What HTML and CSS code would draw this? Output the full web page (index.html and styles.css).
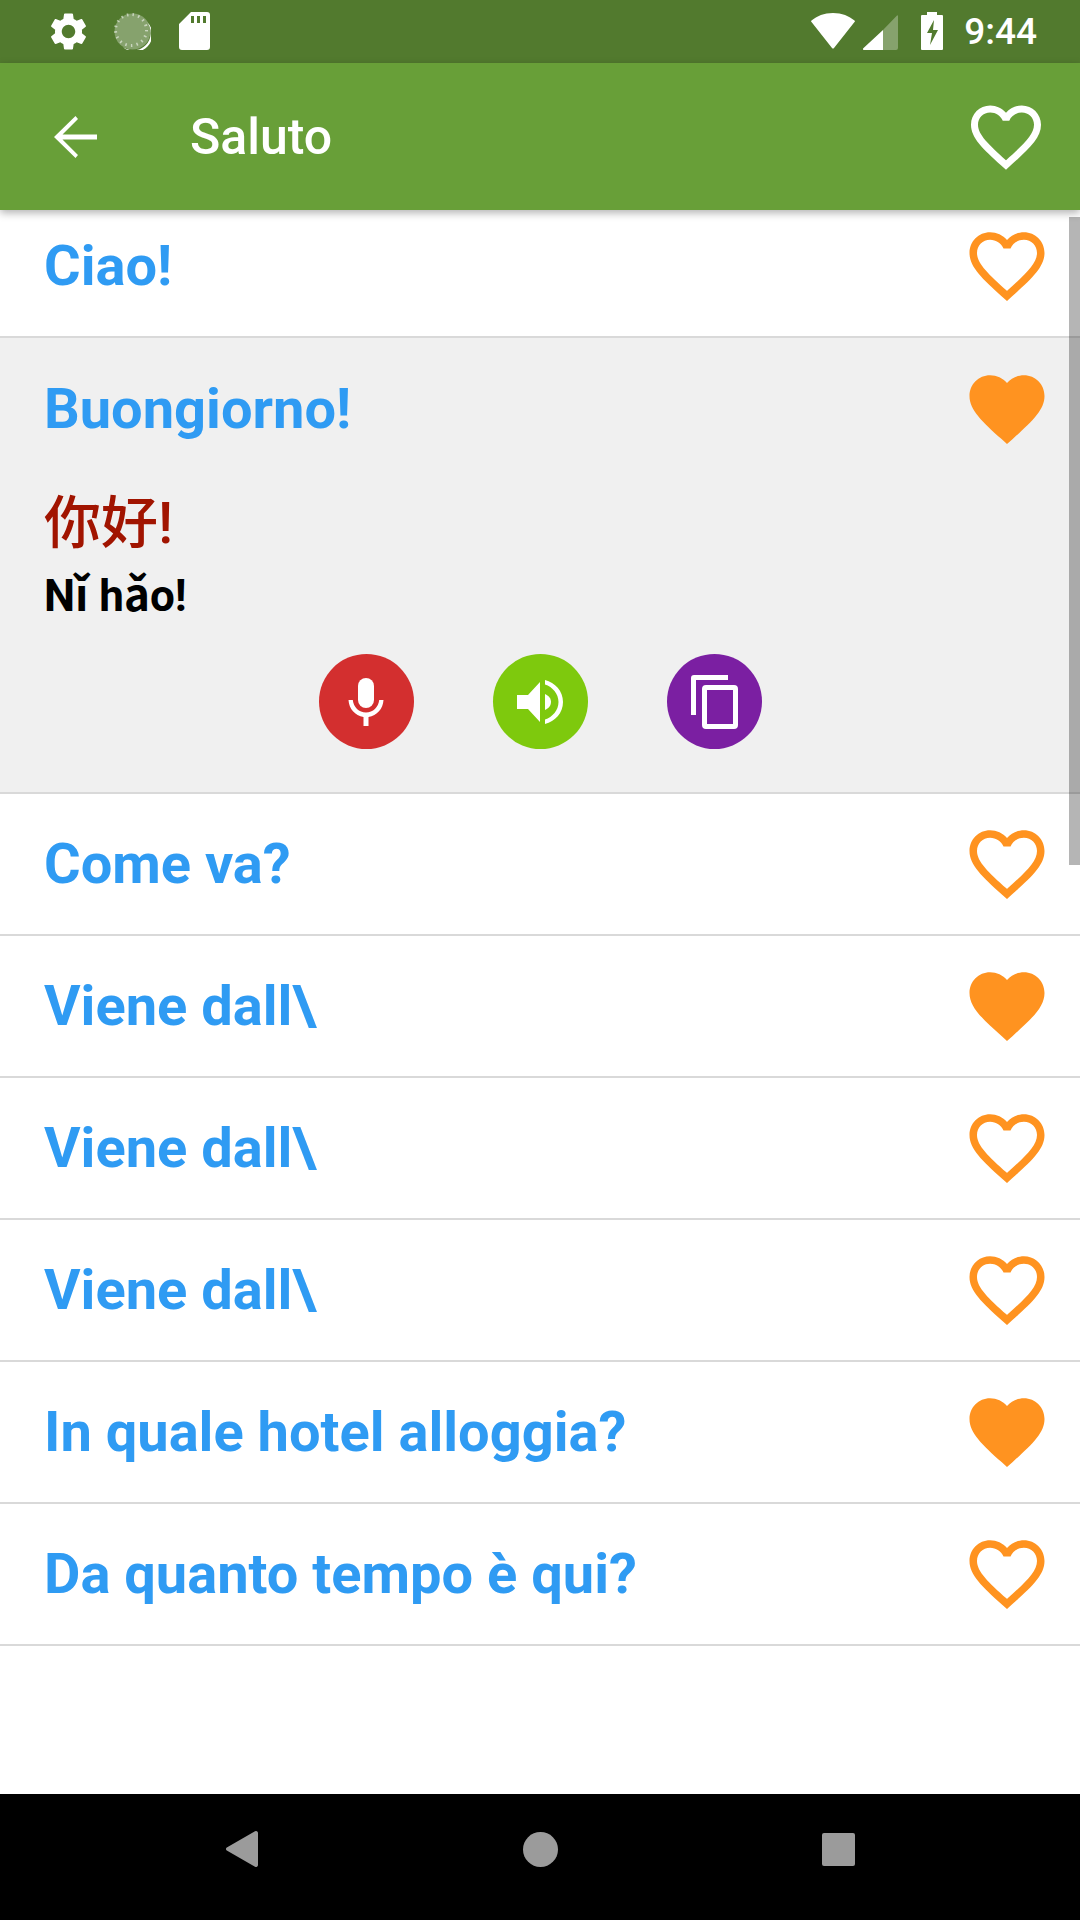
FILE: index.html
```html
<!DOCTYPE html>
<html lang="it">
<head>
    <meta charset="UTF-8">
    <meta name="viewport" content="width=device-width, initial-scale=1.0">
    <title>Saluto</title>
    <link rel="stylesheet" href="styles.css">
</head>
<body>
    <svg class="defs" width="0" height="0">
        <defs>
            <path id="heartOutline" d="M16.5 3c-1.74 0-3.41.81-4.5 2.09C10.91 3.81 9.24 3 7.5 3 4.42 3 2 5.42 2 8.5c0 3.78 3.4 6.86 8.55 11.54L12 21.35l1.45-1.32C18.6 15.36 22 12.28 22 8.5 22 5.42 19.58 3 16.5 3zm-4.4 15.55l-.1.1-.1-.1C7.14 14.24 4 11.39 4 8.5 4 6.5 5.5 5 7.5 5c1.54 0 3.04.99 3.57 2.36h1.87C13.46 5.99 14.96 5 16.5 5c2 0 3.5 1.5 3.5 3.5 0 2.89-3.14 5.74-7.9 10.05z"/>
            <path id="heartFull" d="M12 21.35l-1.45-1.32C5.4 15.36 2 12.28 2 8.5 2 5.42 4.42 3 7.5 3c1.74 0 3.41.81 4.5 2.09C13.09 3.81 14.76 3 16.5 3 19.58 3 22 5.42 22 8.5c0 3.78-3.4 6.86-8.55 11.54L12 21.35z"/>
        </defs>
    </svg>

    <div class="phone">
        <!--status bar-->
        <header class="statusBar">
            <div class="statusLeft">
                <svg class="gear" viewBox="2.4 1.6 19.2 20.8"><path d="M19.14 12.94c.04-.3.06-.61.06-.94 0-.32-.02-.64-.07-.94l2.03-1.58c.18-.14.23-.41.12-.61l-1.92-3.32c-.12-.22-.37-.29-.59-.22l-2.39.96c-.5-.38-1.03-.7-1.62-.94l-.36-2.54c-.04-.24-.24-.41-.48-.41h-3.84c-.24 0-.43.17-.47.41l-.36 2.54c-.59.24-1.13.57-1.62.94l-2.39-.96c-.22-.08-.47 0-.59.22L2.74 8.87c-.12.21-.08.47.12.61l2.03 1.58c-.05.3-.09.63-.09.94s.02.64.07.94l-2.03 1.58c-.18.14-.23.41-.12.61l1.92 3.32c.12.22.37.29.59.22l2.39-.96c.5.38 1.03.7 1.62.94l.36 2.54c.05.24.24.41.48.41h3.84c.24 0 .44-.17.47-.41l.36-2.54c.59-.24 1.13-.56 1.62-.94l2.39.96c.22.08.47 0 .59-.22l1.92-3.32c.12-.22.07-.47-.12-.61l-2.01-1.58zM12 15.6c-1.98 0-3.6-1.62-3.6-3.6s1.62-3.6 3.6-3.6 3.6 1.62 3.6 3.6-1.62 3.6-3.6 3.6z"/></svg>
                <svg class="sync" viewBox="0 0 38 38">
                    <circle cx="19.5" cy="19.5" r="18" fill="#fff" opacity=".3"/>
                    <path d="M34 10a17.500 17.500 0 0 1-24 25 17 17 0 0 0 24-25z" fill="#fff"/>
                    <circle cx="18" cy="18" r="15.500" fill="none" stroke="#fff" stroke-opacity=".55" stroke-width="3" stroke-dasharray="1.500 4.200"/>
                </svg>
                <svg class="sdCard" viewBox="0 0 31 38"><path fill-rule="evenodd" d="M12 0h16a3 3 0 0 1 3 3v32a3 3 0 0 1-3 3H3a3 3 0 0 1-3-3V12zM12 4v7h3V4zM18 4v7h3V4zM24 4v7h3V4z"/></svg>
            </div>
            <div class="statusRight">
                <svg class="wifi" viewBox="0 0 44 36"><path d="M22 0C13 0 6 3 .5 7.500a1 1 0 0 0 0 1.500L21 35a1.400 1.400 0 0 0 2 0L43.500 9a1 1 0 0 0 0-1.500C38 3 31 0 22 0z"/></svg>
                <svg class="signal" viewBox="0 0 35 35"><path d="M20 15 34 .5a.6.600 0 0 1 1 .5V33a2 2 0 0 1-2 2H20z" opacity=".3"/><path d="M20 15V35H1a1 1 0 0 1-.7-1.700z"/></svg>
                <svg class="battery" viewBox="0 0 22 38"><path fill-rule="evenodd" d="M6 0h10v3h5a1 1 0 0 1 1 1v33a1 1 0 0 1-1 1H1a1 1 0 0 1-1-1V4a1 1 0 0 1 1-1h5zM13 8 6 21h5l-2 12 8-15h-5z"/></svg>
                <span class="clock">9:44</span>
            </div>
        </header>

        <!--action bar-->
        <nav class="appBar">
            <svg class="backArrow" viewBox="0 0 44 42"><path d="M44 18.500H9.500L25 3 22.500 0 1 21l21.500 21 2.500-3-15.500-15.500H44z"/></svg>
            <h1 class="screenTitle">Saluto</h1>
            <svg class="barHeart" viewBox="0 0 24 24"><use href="#heartOutline"/></svg>
        </nav>

        <main class="list">
            <div class="row firstRow">
                <span class="phrase">Ciao!</span>
                <svg class="heart" viewBox="0 0 24 24"><use href="#heartOutline"/></svg>
            </div>

            <div class="openRow">
                <div class="rowHead">
                    <span class="phrase">Buongiorno!</span>
                    <svg class="heart" viewBox="0 0 24 24"><use href="#heartFull"/></svg>
                </div>
                <p class="hanzi" lang="zh-CN">你好!</p>
                <p class="pinyin">Nǐ hǎo!</p>
                <div class="actions">
                    <button class="action micBtn">
                        <svg viewBox="0 0 36 48"><path d="M18 0a8 8 0 0 0-8 8v14a8 8 0 0 0 16 0V8a8 8 0 0 0-8-8z"/><path d="M.5 22C1 31 7 37.500 15.500 39v9h5v-9C29 37.500 35 31 35.500 22h-4.300C30.500 29 25 34.500 18 34.500S5.500 29 4.800 22z"/></svg>
                    </button>
                    <button class="action soundBtn">
                        <svg viewBox="0 0 46 44"><path d="M0 15h11L23 2v40L11 29H0z"/><path d="M28 14c3.600 1.500 6 4.500 6 8s-2.400 6.500-6 8z"/><path d="M28 0c10 2.500 18 11 18 22s-8 19.500-18 22v-4.500c7.500-2.500 13.500-9 13.500-17.500S35.500 7 28 4.500z"/></svg>
                    </button>
                    <button class="action copyBtn">
                        <svg viewBox="0 0 47 54"><path d="M3 0h34v5H5v35H0V3a3 3 0 0 1 3-3z"/><path fill-rule="evenodd" d="M15 10h28a4 4 0 0 1 4 4v36a4 4 0 0 1-4 4H15a4 4 0 0 1-4-4V14a4 4 0 0 1 4-4zm1 5v34h26V15z"/></svg>
                    </button>
                </div>
            </div>

            <div class="row">
                <span class="phrase">Come va?</span>
                <svg class="heart" viewBox="0 0 24 24"><use href="#heartOutline"/></svg>
            </div>
            <div class="row">
                <span class="phrase">Viene dall\</span>
                <svg class="heart" viewBox="0 0 24 24"><use href="#heartFull"/></svg>
            </div>
            <div class="row">
                <span class="phrase">Viene dall\</span>
                <svg class="heart" viewBox="0 0 24 24"><use href="#heartOutline"/></svg>
            </div>
            <div class="row">
                <span class="phrase">Viene dall\</span>
                <svg class="heart" viewBox="0 0 24 24"><use href="#heartOutline"/></svg>
            </div>
            <div class="row">
                <span class="phrase">In quale hotel alloggia?</span>
                <svg class="heart" viewBox="0 0 24 24"><use href="#heartFull"/></svg>
            </div>
            <div class="row">
                <span class="phrase">Da quanto tempo è qui?</span>
                <svg class="heart" viewBox="0 0 24 24"><use href="#heartOutline"/></svg>
            </div>

            <div class="scrollThumb"></div>
        </main>

        <!--system navigation-->
        <footer class="navBar">
            <svg class="navBack" viewBox="0 0 32 36"><path d="M.8 16.500 29 .3a2 2 0 0 1 3 1.700v32a2 2 0 0 1-3 1.700L.8 19.500a1.800 1.800 0 0 1 0-3z"/></svg>
            <span class="navHome"></span>
            <span class="navRecent"></span>
        </footer>
    </div>
</body>
</html>
```

FILE: styles.css
```css
*{
    box-sizing: border-box;
    font-family: Roboto, "Noto Sans CJK SC", sans-serif;
}

body{
    margin: 0;
    background-color: #fff;
}

.defs{
    position: absolute;
}

.phone{
    width: 1080px;
    height: 1920px;
    display: flex;
    flex-direction: column;
    overflow: hidden;
}

/* status bar */
.statusBar{
    height: 63px;
    flex: none;
    display: flex;
    justify-content: space-between;
    align-items: center;
    padding: 0 43px 1px 50px;
    background-color: #527a2e;
    fill: #fff;
    color: #fff;
}

.statusLeft, .statusRight{
    display: flex;
    align-items: center;
}

.gear{
    width: 37px;
    height: 39px;
    margin-right: 26px;
}

.sync{
    width: 38px;
    height: 38px;
    margin-right: 28px;
}

.sdCard{
    width: 31px;
    height: 38px;
}

.wifi{
    width: 44px;
    height: 36px;
    margin-right: 8px;
}

.signal{
    width: 35px;
    height: 35px;
    margin: 2px 23px 0 0;
}

.battery{
    width: 22px;
    height: 38px;
    margin-right: 21px;
}

.clock{
    font-size: 37px;
    font-weight: 500;
}

/* action bar */
.appBar{
    height: 147px;
    flex: none;
    position: relative;
    z-index: 2;
    display: flex;
    align-items: center;
    padding: 0 32px 0 53px;
    background-color: #689f38;
    box-shadow: 0 3px 8px rgba(0, 0, 0, .3);
    fill: #fff;
}

.backArrow{
    width: 44px;
    height: 42px;
    margin-right: 93px;
}

.screenTitle{
    flex: 1;
    margin: 0;
    font-size: 50px;
    font-weight: 500;
    color: #fff;
}

.barHeart{
    width: 84px;
    height: 84px;
}

/* phrase list */
.list{
    flex: 1;
    position: relative;
    overflow: hidden;
}

.row, .rowHead{
    height: 142px;
    display: flex;
    justify-content: space-between;
    align-items: center;
    padding: 0 28px 0 44px;
}

.row{
    height: 142px;
    border-bottom: 2px solid #d9d9d9;
}

.firstRow{
    margin-top: -14px;
}

.phrase{
    font-size: 56px;
    font-weight: 700;
    color: #2f9bf3;
}

.heart{
    width: 90px;
    height: 90px;
    fill: #ff9320;
}

.openRow{
    height: 456px;
    background-color: #f0f0f0;
    border-bottom: 2px solid #d9d9d9;
}

.hanzi{
    margin: 4px 0 0 44px;
    font-size: 57px;
    line-height: 80px;
    font-weight: 500;
    color: #a11400;
}

.pinyin{
    margin: 4px 0 0 44px;
    font-size: 44px;
    line-height: 56px;
    font-weight: 700;
    color: #000;
}

.actions{
    display: flex;
    justify-content: center;
    gap: 79px;
    margin-top: 30px;
}

.action{
    width: 95px;
    height: 95px;
    display: flex;
    align-items: center;
    justify-content: center;
    padding: 0;
    border: none;
    border-radius: 50%;
    fill: #fff;
}

.micBtn{
    background-color: #d32f2f;
}

.micBtn svg{
    width: 36px;
    height: 48px;
}

.soundBtn{
    background-color: #7ec90d;
}

.soundBtn svg{
    width: 46px;
    height: 44px;
}

.copyBtn{
    background-color: #7b1fa2;
}

.copyBtn svg{
    width: 47px;
    height: 54px;
}

.scrollThumb{
    position: absolute;
    top: 7px;
    right: 0;
    width: 11px;
    height: 648px;
    background-color: rgba(0, 0, 0, .29);
}

/* system navigation */
.navBar{
    height: 126px;
    flex: none;
    display: flex;
    justify-content: center;
    align-items: center;
    gap: 0;
    padding-bottom: 16px;
    background-color: #000;
    fill: #9b9b9b;
}

.navBack{
    width: 32px;
    height: 36px;
    margin-right: 265px;
}

.navHome{
    width: 35px;
    height: 35px;
    margin-right: 264px;
    border-radius: 50%;
    background-color: #9b9b9b;
}

.navRecent{
    width: 33px;
    height: 33px;
    border-radius: 2px;
    background-color: #9b9b9b;
}
```
